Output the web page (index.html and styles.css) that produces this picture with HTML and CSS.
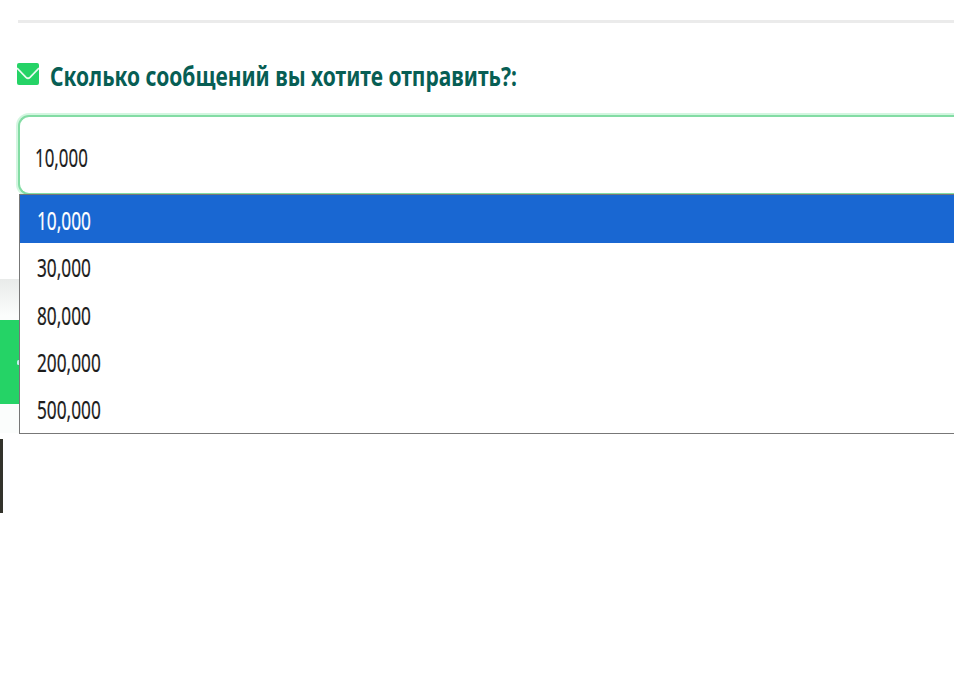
FILE: index.html
```html
<!DOCTYPE html>
<html lang="ru">

<head>
    <meta charset="UTF-8">
    <meta name="viewport" content="width=device-width, initial-scale=1.0">
    <title>Сообщения</title>
    <link rel="stylesheet" href="styles.css">
</head>

<body>
    <div class="card">
        <hr class="divider">
        <div class="form-group">
            <div class="label">
                <svg class="icon" viewBox="0 0 22 22">
                    <rect width="22" height="22" rx="2" fill="#25d366"/>
                    <path d="M0 5 L9 14.3 Q11 16.2 13 14.3 L22 5" fill="none" stroke="#e9fbf0" stroke-width="1.7"/>
                </svg>
                <span class="label-text">Сколько сообщений вы хотите отправить?:</span>
            </div>
            <div class="select">
                <span class="value">10,000</span>
                <div class="dropdown">
                    <div class="option selected"><span>10,000</span></div>
                    <div class="option"><span>30,000</span></div>
                    <div class="option"><span>80,000</span></div>
                    <div class="option"><span>200,000</span></div>
                    <div class="option"><span>500,000</span></div>
                </div>
            </div>
        </div>
    </div>
    <div class="actions">
        <div class="send-button"><span class="send-dot"></span></div>
    </div>
    <div class="footer-bar"></div>
</body>

</html>
```
FILE: styles.css
```css
* {
    box-sizing: border-box;
}

body {
    font-family: "Noto Sans", "Open Sans", sans-serif;
    margin: 0;
    background-color: #fff;
    height: 698px;
    overflow: hidden;
}

.card {
    height: 279px;
    padding: 20px 0 0 18px;
    background-color: #fff;
}

.divider {
    margin: 0;
    border: none;
    height: 3px;
    background-color: #ebebeb;
}

.form-group {
    padding-top: 34px;
}

.label {
    display: flex;
    height: 40px;
    padding-top: 6px;
    margin-left: -1px;
}

.icon {
    width: 22px;
    height: 22px;
    flex: none;
}

.label-text {
    width: 400px;
    margin: -1px 0 0 11px;
    font-size: 27px;
    font-weight: bold;
    line-height: 28px;
    color: #075e54;
    white-space: nowrap;
    transform: scaleX(0.777);
    transform-origin: left;
}

.select {
    position: relative;
    height: 80px;
    margin-top: 18px;
    padding: 23px 0 0 15px;
    border: 2px solid #83dca4;
    border-right: none;
    border-radius: 11px 0 0 11px;
    background-color: #fff;
    box-shadow: 0 0 0 2px #d3f6e0;
}

.value,
.option span {
    display: inline-block;
    font-size: 25px;
    line-height: 34px;
    color: #1c1c1c;
    -webkit-text-stroke: 0.2px;
    transform: scaleX(0.69);
    transform-origin: left;
}

.value {
    transform: scaleX(0.675);
}

.dropdown {
    position: absolute;
    top: 77px;
    left: -1px;
    right: 0;
    height: 240px;
    border: 1px solid #777;
    border-right: none;
    background-color: #fff;
}

.option {
    height: 47.3px;
    padding: 8px 0 0 17px;
}

.selected {
    background-color: #1967d2;
    box-shadow: 0 1px 0 #1967d2;
}

.selected span {
    color: #fff;
}

.actions {
    height: 154px;
    padding-top: 41px;
    background: linear-gradient(#e9ebea, #fbfdfc 36px);
}

.send-button {
    display: flex;
    align-items: center;
    width: 60px;
    height: 84px;
    background-color: #25d366;
}

.send-dot {
    width: 3px;
    height: 5px;
    margin-left: 17px;
    border-radius: 2px;
    background-color: #c5f2ee;
}

.footer-bar {
    width: 3px;
    height: 74px;
    margin-top: 6px;
    background-color: #33332b;
}
```
